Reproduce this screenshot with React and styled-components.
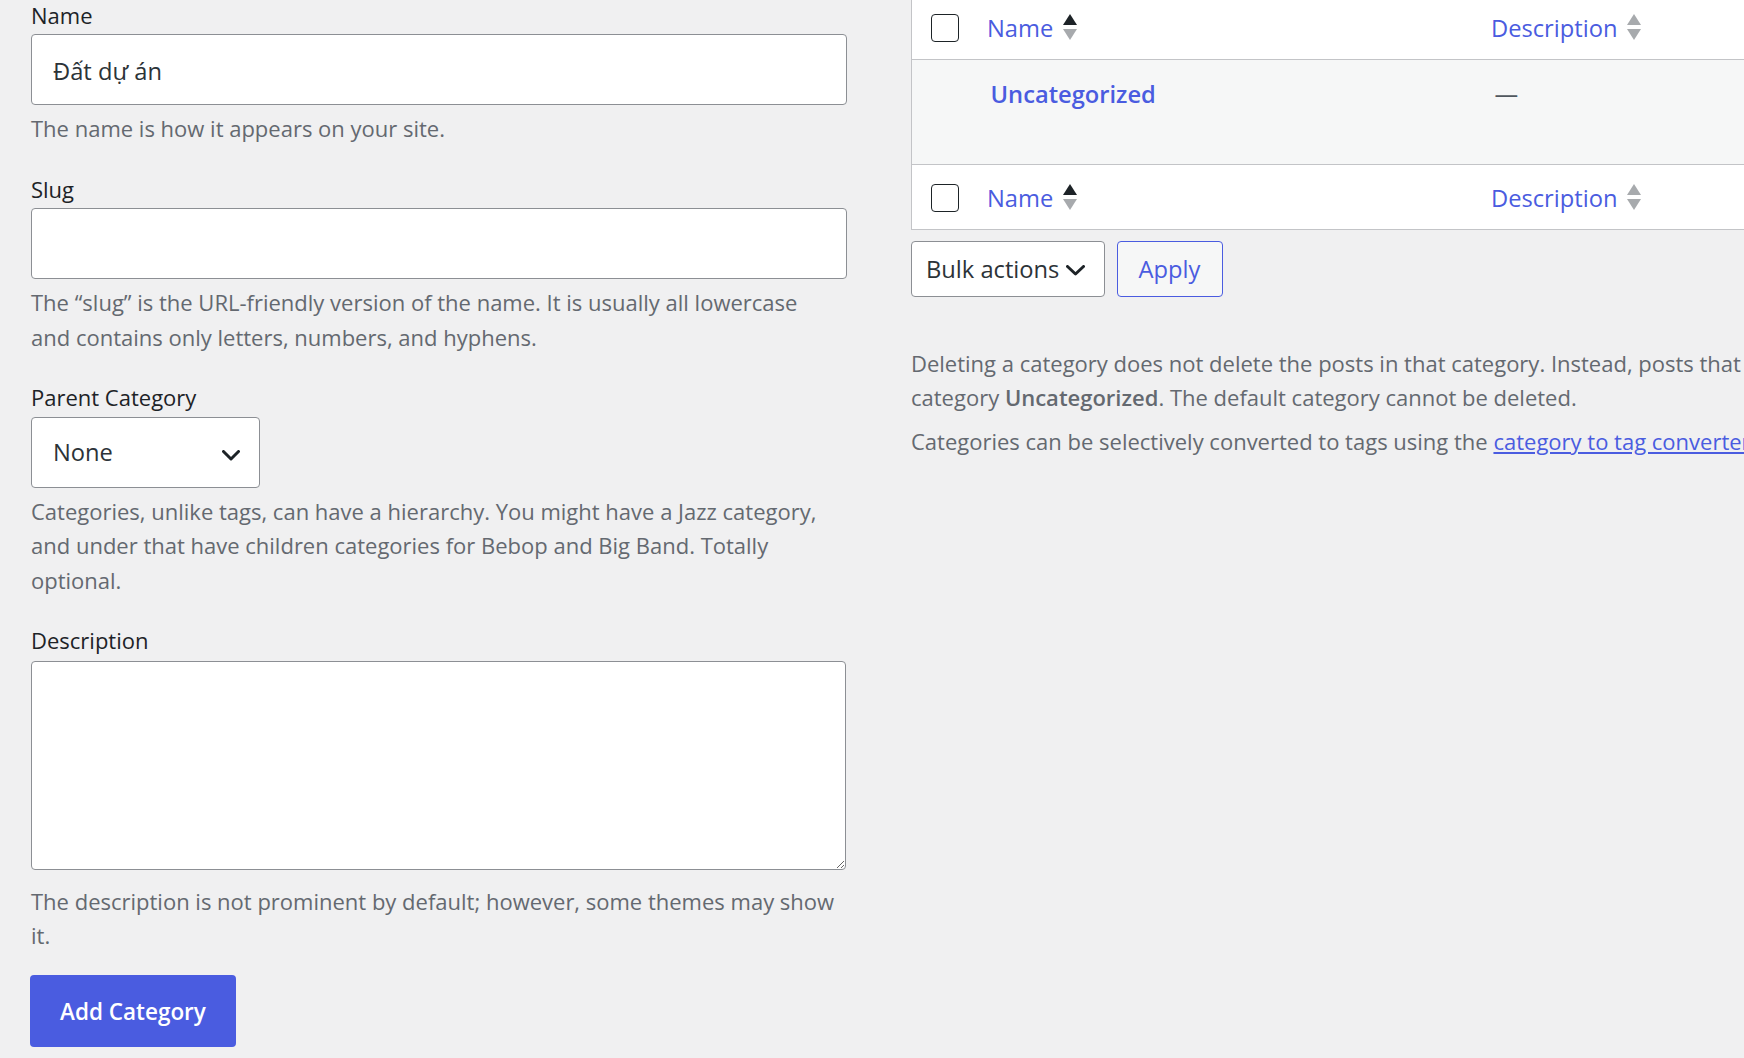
import React from 'react';
import styled, {createGlobalStyle} from 'styled-components';

const accent = '#4a5ce0';

const GlobalStyle = createGlobalStyle`
  html, body {
    margin: 0;
    overflow: hidden;
    background: #f0f0f1;
  }
  body {
    font-family: "Open Sans", "Noto Sans", "Liberation Sans", sans-serif;
    color: #3c434a;
  }
  * {
    box-sizing: border-box;
  }
`;

const Page = styled.div`
  display: flex;
  align-items: flex-start;
  gap: 64px;
  padding-left: 31px;
  width: max-content;
`;

/* ---------- left: add new category form ---------- */

const LeftCol = styled.form`
  flex: none;
  width: 816px;
  margin-top: -2.5px;
`;

const Field = styled.div`
  margin-bottom: ${(p) => p.$spacing ?? 26}px;
`;

const Label = styled.label`
  display: block;
  font-size: 22px;
  line-height: 34.5px;
  color: #1d2327;
  margin-bottom: 2px;
`;

const TextInput = styled.input`
  display: block;
  width: 100%;
  height: 71px;
  margin: 0;
  padding: 3px 20px 0 21px;
  border: 1px solid #8c8f94;
  border-radius: 4px;
  background: #fff;
  font-family: inherit;
  font-size: 23.7px;
  color: #2c3338;
  outline: none;
`;

const TextArea = styled.textarea`
  display: block;
  width: 815px;
  height: 209px;
  margin: 3px 0 0;
  padding: 10px 20px;
  border: 1px solid #8c8f94;
  border-radius: 4px;
  background: #fff;
  font-family: inherit;
  font-size: 23.7px;
  color: #2c3338;
  outline: none;
`;

const Hint = styled.p`
  max-width: 806px;
  margin: ${(p) => p.$top ?? 6}px 0 0;
  font-size: 22px;
  line-height: 34.5px;
  color: #646970;
`;

const SelectBox = styled.div`
  display: flex;
  align-items: center;
  justify-content: space-between;
  width: ${(p) => p.$width}px;
  height: ${(p) => p.$height}px;
  padding: 0 19px 0 ${(p) => p.$padLeft}px;
  border: 1px solid #8c8f94;
  border-radius: 4px;
  background: #fff;
  font-size: 23.7px;
  color: #2c3338;
  flex: none;
`;

const ChevronSvg = styled.svg`
  flex: none;
  margin-top: ${(p) => p.$shift}px;
  color: #1d2327;
`;

const Chevron = ({shift = 0, width = 18}) => (
  <ChevronSvg $shift={shift} width={width} height="11" viewBox={`0 0 ${width} 11`}>
    <polyline
      points={`1.5,1.5 ${width / 2},9 ${width - 1.5},1.5`}
      fill="none"
      stroke="currentColor"
      strokeWidth="3"
      strokeLinecap="round"
      strokeLinejoin="round"
    />
  </ChevronSvg>
);

const PrimaryButton = styled.button`
  display: block;
  height: 72px;
  margin-left: -1px;
  padding: 0 30px;
  border: none;
  border-radius: 4px;
  background: ${accent};
  color: #fff;
  font-family: inherit;
  font-size: 22.5px;
  font-weight: 600;
  cursor: pointer;
`;

/* ---------- right: category list ---------- */

const RightCol = styled.div`
  flex: none;
  width: 1555px;
  margin-top: -6px;
`;

const Table = styled.div`
  border: 1px solid #c3c4c7;
  background: #fff;
`;

const Row = styled.div`
  display: grid;
  grid-template-columns: 59px 504px 1fr;
  height: ${(p) => p.$height}px;
  background: ${(p) => (p.$shade ? '#f6f7f7' : '#fff')};
  & + & {
    border-top: 1px solid #c3c4c7;
  }
`;

const CheckCell = styled.div`
  padding: 19px 0 0 19px;
`;

const Checkbox = styled.span`
  display: block;
  width: 28px;
  height: 28px;
  border: 1.5px solid #1d2327;
  border-radius: 4px;
  background: #fff;
`;

const HeadCell = styled.div`
  display: flex;
  align-items: flex-start;
  gap: 10px;
  padding: 17px 0 0 16px;
`;

const SortLink = styled.a`
  color: ${accent};
  font-size: 23.7px;
  line-height: 33.2px;
  text-decoration: none;
`;

const ArrowSvg = styled.svg`
  flex: none;
  margin-top: 2px;
`;

const SortArrows = ({active}) => (
  <ArrowSvg width="14" height="26" viewBox="0 0 14 26">
    <polygon points="7,0 14,11 0,11" fill={active ? '#1d2327' : '#a7aaad'} />
    <polygon points="0,15 14,15 7,26" fill="#a7aaad" />
  </ArrowSvg>
);

const BodyCell = styled.div`
  padding: 18px 0 0 19.5px;
  font-size: 23.7px;
  line-height: 33.2px;
  color: #50575e;
`;

const RowTitle = styled.a`
  color: ${accent};
  font-weight: 600;
  text-decoration: none;
`;

const TableNav = styled.div`
  display: flex;
  gap: 11.5px;
  margin-top: 11px;
`;

const SecondaryButton = styled.button`
  width: 106px;
  height: 56px;
  padding: 0;
  border: 1px solid ${accent};
  border-radius: 4px;
  background: #f6f7f7;
  color: ${accent};
  font-family: inherit;
  font-size: 23.7px;
  font-weight: 500;
`;

const Notes = styled.div`
  margin-top: 48.6px;
  font-size: 22px;
  line-height: 34.5px;
  color: #646970;
  p {
    margin: 0;
  }
  p + p {
    margin-top: 9.3px;
  }
  strong {
    font-weight: 600;
  }
  a {
    color: ${accent};
  }
`;

const HeaderRow = () => (
  <>
    <CheckCell>
      <Checkbox />
    </CheckCell>
    <HeadCell>
      <SortLink href="#">Name</SortLink>
      <SortArrows active />
    </HeadCell>
    <HeadCell>
      <SortLink href="#">Description</SortLink>
      <SortArrows />
    </HeadCell>
  </>
);

export default function App() {
  return (
    <>
      <GlobalStyle />
      <Page>
        <LeftCol onSubmit={(e) => e.preventDefault()}>
          <Field>
            <Label htmlFor="tag-name">Name</Label>
            <TextInput id="tag-name" type="text" defaultValue="Đất dự án" />
            <Hint>The name is how it appears on your site.</Hint>
          </Field>
          <Field>
            <Label htmlFor="tag-slug">Slug</Label>
            <TextInput id="tag-slug" type="text" />
            <Hint>
              The “slug” is the URL-friendly version of the name. It is usually all lowercase
              and contains only letters, numbers, and hyphens.
            </Hint>
          </Field>
          <Field>
            <Label>Parent Category</Label>
            <SelectBox $width={229} $height={71} $padLeft={21}>
              <span>None</span>
              <Chevron shift={6} />
            </SelectBox>
            <Hint>
              Categories, unlike tags, can have a hierarchy. You might have a Jazz category,
              and under that have children categories for Bebop and Big Band. Totally
              optional.
            </Hint>
          </Field>
          <Field $spacing={22.5}>
            <Label htmlFor="tag-description">Description</Label>
            <TextArea id="tag-description" />
            <Hint $top={14}>
              The description is not prominent by default; however, some themes may show it.
            </Hint>
          </Field>
          <PrimaryButton type="submit">Add Category</PrimaryButton>
        </LeftCol>

        <RightCol>
          <Table>
            <Row $height={64}>
              <HeaderRow />
            </Row>
            <Row $height={105} $shade>
              <div />
              <BodyCell>
                <strong>
                  <RowTitle href="#">Uncategorized</RowTitle>
                </strong>
              </BodyCell>
              <BodyCell>—</BodyCell>
            </Row>
            <Row $height={65}>
              <HeaderRow />
            </Row>
          </Table>

          <TableNav>
            <SelectBox $width={194} $height={56} $padLeft={14}>
              <span>Bulk actions</span>
              <Chevron shift={2} width={19} />
            </SelectBox>
            <SecondaryButton type="button">Apply</SecondaryButton>
          </TableNav>

          <Notes>
            <p>
              Deleting a category does not delete the posts in that category. Instead, posts
              that were only assigned to the deleted category are set to the default category{' '}
              <strong>Uncategorized</strong>. The default category cannot be deleted.
            </p>
            <p>
              Categories can be selectively converted to tags using the{' '}
              <a href="#">category to tag converter</a>.
            </p>
          </Notes>
        </RightCol>
      </Page>
    </>
  );
}
